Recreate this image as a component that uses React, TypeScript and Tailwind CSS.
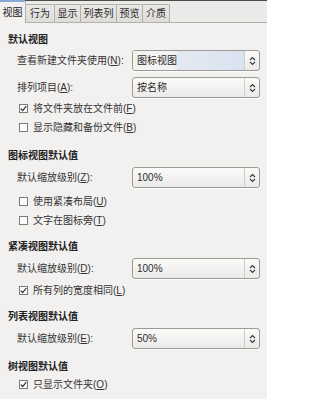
import React from "react";

const FONT = "font-['Liberation_Sans','Noto_Sans_CJK_SC',sans-serif]";

function Mn({ k }: { k: string }) {
  return <u className="underline underline-offset-[1px] decoration-[1px]">{k}</u>;
}

function Label({ text, k }: { text: string; k: string }) {
  return (
    <span>
      {text}(<Mn k={k} />)
    </span>
  );
}

function Combo({ value, hover = false }: { value: string; hover?: boolean }) {
  return (
    <div className="w-[128px] h-[21px] flex rounded-[3px] border border-[#9c9a96] bg-gradient-to-b from-[#fbfbfa] to-[#ebeae8] shadow-[0_1px_0_rgba(255,255,255,0.8)] overflow-hidden">
      <div
        className={
          "flex-1 flex items-center pl-[4px] text-[#2b2b2b] " +
          (hover
            ? "bg-[linear-gradient(to_right,#f3f3f2_0%,#f3f3f2_36%,#e3e9f2_42%,#d9e3ef_100%)]"
            : "")
        }
      >
        {value}
      </div>
      <div className="w-[15px] flex items-center justify-center border-l border-[#cfcdca]">
        <svg width="7" height="10" viewBox="0 0 7 10" fill="none" stroke="#3a3a3a" strokeWidth="1.1">
          <path d="M1 4 L3.5 1.5 L6 4" />
          <path d="M1 6 L3.5 8.5 L6 6" />
        </svg>
      </div>
    </div>
  );
}

function ComboRow({ label, k, value, hover, mt }: { label: string; k: string; value: string; hover?: boolean; mt: string }) {
  return (
    <div className={"flex items-center pl-[17px] " + mt}>
      <div className="w-[115px] text-[#333]">
        <Label text={label} k={k} />:
      </div>
      <Combo value={value} hover={hover} />
    </div>
  );
}

function Check({ label, k, checked, mt }: { label: string; k: string; checked: boolean; mt: string }) {
  return (
    <div className={"h-[19px] flex items-center pl-[19px] gap-[5px] text-[#333] " + mt}>
      <div className="w-[9px] h-[9px] border border-[#7d7b78] bg-[#fcfcfc] flex items-center justify-center">
        {checked && (
          <svg width="7" height="7" viewBox="0 0 7 7" fill="none" stroke="#2a2a2a" strokeWidth="1.2">
            <path d="M0.8 3.6 L2.7 5.6 L6.3 1" />
          </svg>
        )}
      </div>
      <Label text={label} k={k} />
    </div>
  );
}

function Header({ text, mt }: { text: string; mt: string }) {
  return <div className={"h-[14px] flex items-center pl-[8px] font-bold text-[#222] " + mt}>{text}</div>;
}

const tabs = [
  { t: "行为", w: "w-[30px]" },
  { t: "显示", w: "w-[27px]" },
  { t: "列表列", w: "w-[37px]" },
  { t: "预览", w: "w-[27px]" },
  { t: "介质", w: "w-[28px]" },
];

export default function App() {
  return (
    <div className={"w-[267px] h-[399px] overflow-hidden bg-[#f2f1f0] text-[10px] leading-[14px] " + FONT}>
      <div className="h-px bg-[#4d4c4a]" />
      <div className="flex items-end h-[22px] border-b border-[#b3b1ad] bg-[#ebeae8]">
        <div className="w-[26px] h-[23px] -mb-px bg-[#f2f1f0] border-t-2 border-t-[#86a9d6] border-r border-r-[#b3b1ad] rounded-tr-[2px] flex items-center justify-center text-[#222]">
          视图
        </div>
        {tabs.map((x) => (
          <div
            key={x.t}
            className={
              x.w +
              " h-[18px] border border-b-0 border-[#b3b1ad] -ml-px first:ml-0 rounded-t-[2px] bg-gradient-to-b from-[#e9e8e6] to-[#dddcd9] flex items-center justify-center text-[#2a2a2a]"
            }
          >
            {x.t}
          </div>
        ))}
      </div>

      <Header text="默认视图" mt="mt-[10px]" />
      <ComboRow label="查看新建文件夹使用" k="N" value="图标视图" hover mt="mt-[3px]" />
      <ComboRow label="排列项目" k="A" value="按名称" mt="mt-[6px]" />
      <Check label="将文件夹放在文件前" k="F" checked mt="mt-px" />
      <Check label="显示隐藏和备份文件" k="B" checked={false} mt="mt-0" />

      <Header text="图标视图默认值" mt="mt-[12px]" />
      <ComboRow label="默认缩放级别" k="Z" value="100%" mt="mt-[4px]" />
      <Check label="使用紧凑布局" k="U" checked={false} mt="mt-[4px]" />
      <Check label="文字在图标旁" k="T" checked={false} mt="mt-0" />

      <Header text="紧凑视图默认值" mt="mt-[10px]" />
      <ComboRow label="默认缩放级别" k="D" value="100%" mt="mt-[4px]" />
      <Check label="所有列的宽度相同" k="L" checked mt="mt-[2px]" />

      <Header text="列表视图默认值" mt="mt-[10px]" />
      <ComboRow label="默认缩放级别" k="E" value="50%" mt="mt-[4px]" />

      <Header text="树视图默认值" mt="mt-[11px]" />
      <Check label="只显示文件夹" k="O" checked mt="mt-px" />
    </div>
  );
}
